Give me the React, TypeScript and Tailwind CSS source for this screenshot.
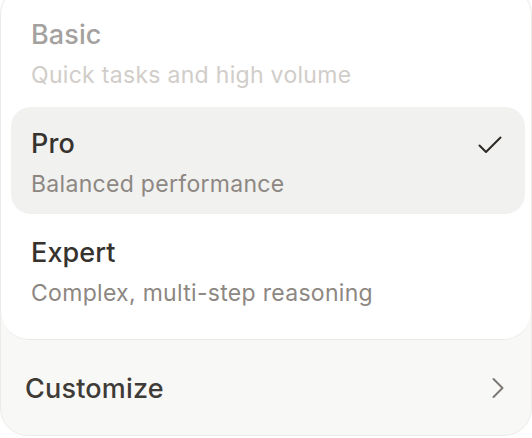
import React from "react";

const items = [
  { title: "Basic", sub: "Quick tasks and high volume", disabled: true, selected: false },
  { title: "Pro", sub: "Balanced performance", disabled: false, selected: true },
  { title: "Expert", sub: "Complex, multi-step reasoning", disabled: false, selected: false },
];

export default function App() {
  return (
    <div className="w-[532px] h-[438px] bg-white overflow-hidden" style={{ fontFamily: "Inter, 'Liberation Sans', sans-serif" }}>
      <div className="-mt-[14px] h-[450px] rounded-[28px] border border-[#ecebe9] bg-[#f8f8f7] flex flex-col overflow-hidden">
        <div className="bg-white rounded-[28px] border-b border-[#ebeae8] pt-[14px] pb-[16px] flex flex-col gap-[2px]">
          {items.map((it, i) => (
            <div
              key={it.title}
              className={
                (it.selected ? "bg-[#f1f1f0] " : "") +
                "ml-[10px] mr-[6px] rounded-[20px] pl-[20px] pr-[23px] pb-[16px] flex items-start justify-between " +
                (i === 0 ? "pt-[18px]" : "pt-[21px]")
              }
            >
              <div className="flex flex-col">
                <div
                  className={
                    "text-[27px] leading-[32px] font-medium tracking-[0.1px] " +
                    (it.disabled ? "text-[#a4a19e]" : "text-[#36322e]")
                  }
                >
                  {it.title}
                </div>
                <div
                  className={
                    "mt-[10px] text-[23px] leading-[28px] tracking-[0.3px] " +
                    (it.disabled ? "text-[#d1cdc9]" : "text-[#8d8782]")
                  }
                >
                  {it.sub}
                </div>
              </div>
              {it.selected && (
                <svg width="24" height="18" viewBox="0 0 24 18" className="mt-[8px]" fill="none">
                  <path d="M1.5 9.5 L8 16 L22.5 1.5" stroke="#2d2a26" strokeWidth="2" strokeLinecap="round" strokeLinejoin="round" />
                </svg>
              )}
            </div>
          ))}
        </div>
        <div className="h-[97px] flex items-center justify-between pl-[24px] pr-[26px]">
          <span className="text-[27px] leading-[32px] font-medium tracking-[0.2px] text-[#3f3b37] mt-[3px]">Customize</span>
          <svg width="14" height="22" viewBox="0 0 14 22" fill="none" className="mt-[1px]">
            <path d="M2.5 2 L11.5 11 L2.5 20" stroke="#7d7874" strokeWidth="2" strokeLinecap="round" strokeLinejoin="round" />
          </svg>
        </div>
      </div>
    </div>
  );
}
